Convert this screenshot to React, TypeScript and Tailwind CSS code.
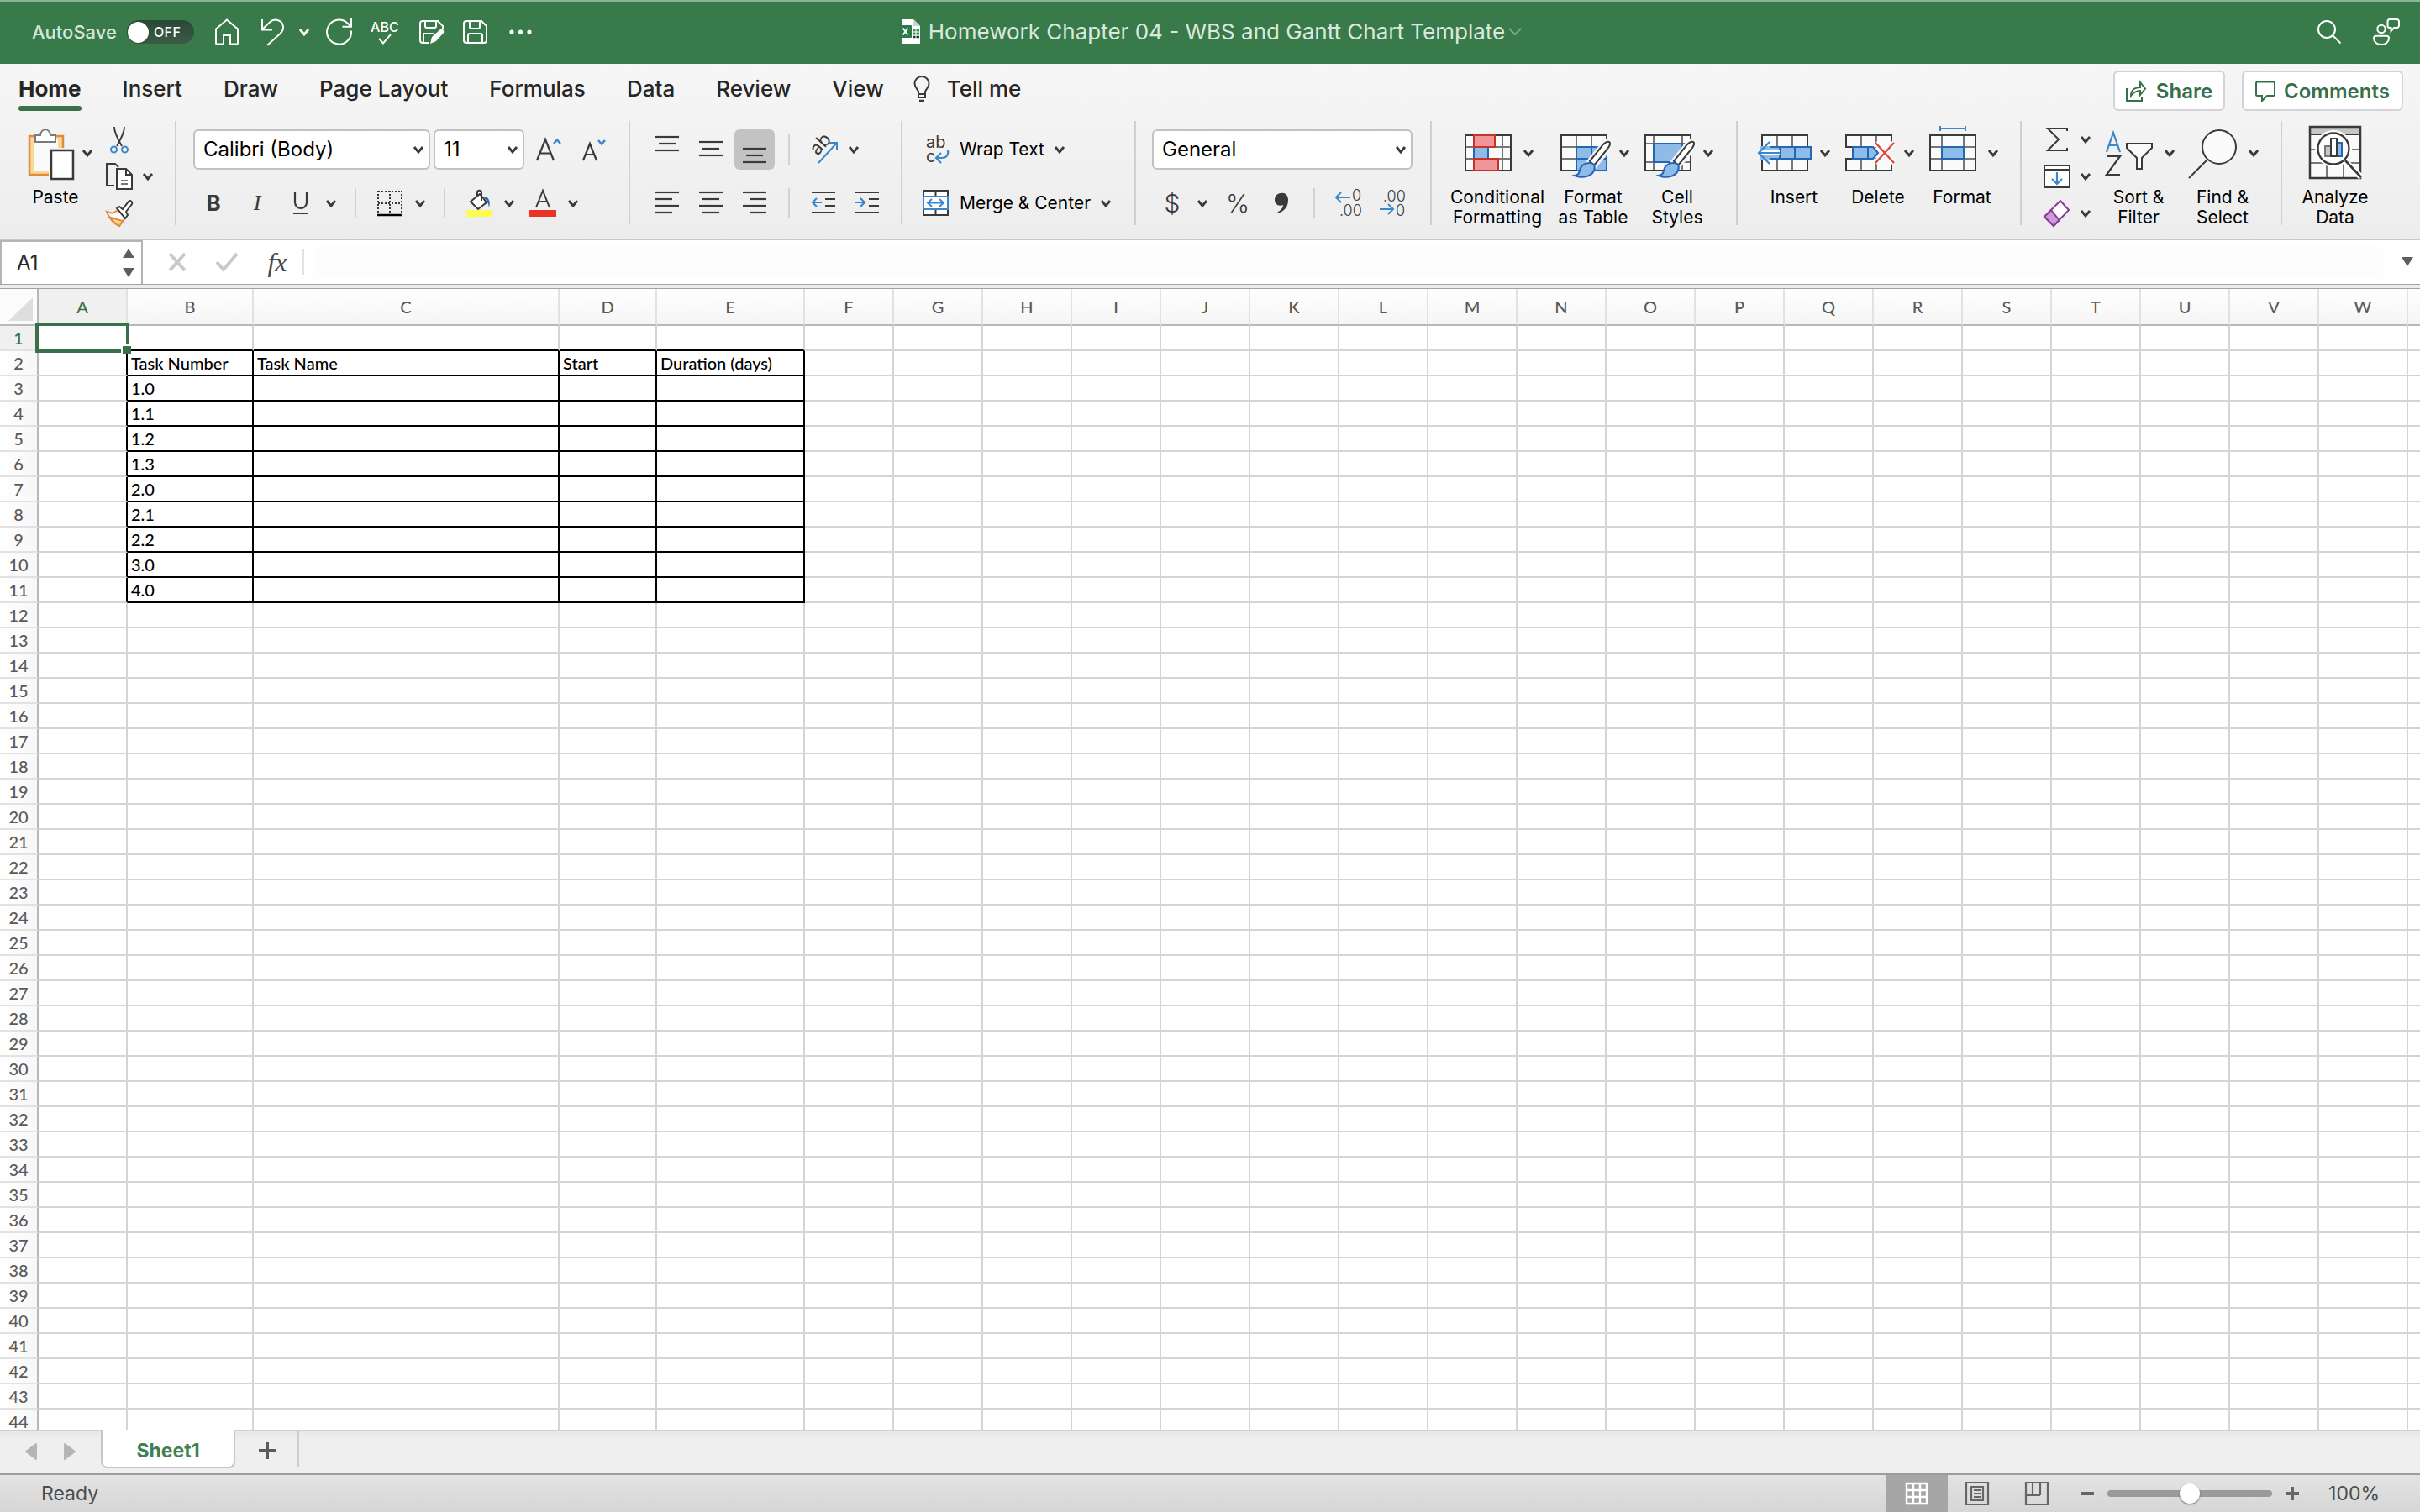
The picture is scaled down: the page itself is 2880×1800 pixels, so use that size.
import { useState, type ReactNode } from "react";

const COLS = "ABCDEFGHIJKLMNOPQRSTUVW".split("");
const ROWS = Array.from({ length: 44 }, (_, i) => i + 1);
const TABS = ["Home", "Insert", "Draw", "Page Layout", "Formulas", "Data", "Review", "View"];

const CELLS: Record<string, string> = {
  B2: "Task Number", C2: "Task Name", D2: "Start", E2: "Duration (days)",
  B3: "1.0", B4: "1.1", B5: "1.2", B6: "1.3", B7: "2.0", B8: "2.1", B9: "2.2", B10: "3.0", B11: "4.0",
};

const colWidth = (c: string) =>
  c === "B" ? "w-[150px]" : c === "C" ? "w-[364px]" : c === "D" ? "w-[116px]" : c === "E" ? "w-[176px]" : "w-[106px]";

// the task table (B2:E11) has black borders; its left and top edges belong to the neighbouring cells
const cellBorder = (c: string, r: number) => {
  const right = "ABCDE".includes(c) && r >= 2 && r <= 11 ? "border-r-black" : "border-r-[#d4d4d4]";
  const bottom = "BCDE".includes(c) && r >= 1 && r <= 11 ? "border-b-black" : "border-b-[#d4d4d4]";
  return `${right} ${bottom}`;
};

function Svg({ w = 32, h = 32, children, className = "" }: { w?: number; h?: number; children: ReactNode; className?: string }) {
  return (
    <svg width={w} height={h} viewBox={`0 0 ${w} ${h}`} fill="none" stroke="#3a3a3a" strokeWidth="2" className={`shrink-0 overflow-visible ${className}`} aria-hidden="true">
      {children}
    </svg>
  );
}

function Chevron({ color = "#3a3a3a" }: { color?: string }) {
  return <Svg w={12} h={8}><path d="M1 1 6 7l5-6" stroke={color} strokeWidth="2.8" /></Svg>;
}

const Sep = () => <div className="w-[2px] h-[124px] shrink-0 bg-[#d0d0d0]" />;
const ShortSep = ({ className = "" }: { className?: string }) => <div className={`w-[2px] h-9 shrink-0 bg-[#d2d2d2] ${className}`} />;

function IconButton({ label, children, className = "" }: { label: string; children: ReactNode; className?: string }) {
  return <button aria-label={label} className={`flex items-center justify-center shrink-0 ${className}`}>{children}</button>;
}

function BigButton({ icon, lines, menu = true, className = "w-[86px]" }: { icon: ReactNode; lines: string[]; menu?: boolean; className?: string }) {
  return (
    <button className={`flex flex-col items-center shrink-0 pt-1.5 ${className}`}>
      <span className="flex items-center gap-2.5">{icon}{menu && <Chevron />}</span>
      <span className="mt-[9px] flex flex-col items-center text-[21px] leading-6 whitespace-nowrap">
        {lines.map((l) => <span key={l}>{l}</span>)}
      </span>
    </button>
  );
}

function Picker({ label, value, className }: { label: string; value: string; className: string }) {
  return (
    <div className={`relative shrink-0 h-12 ${className}`}>
      <select aria-label={label} defaultValue={value} className="appearance-none w-full h-full pl-2.5 rounded-md border-2 border-[#c2c2c2] bg-white text-[24px] text-black">
        <option>{value}</option>
      </select>
      <span className="absolute right-2 top-5 pointer-events-none"><Chevron /></span>
    </div>
  );
}

// horizontal rules of an alignment icon: [x1, x2] per line
function Lines({ spans, top, step }: { spans: number[][]; top: number; step: number }) {
  return <Svg w={28} h={32}>{spans.map(([a, b], i) => <path key={i} d={`M${a} ${top + i * step}H${b}`} strokeWidth="2.2" />)}</Svg>;
}

function TitleBar() {
  const [autoSave, setAutoSave] = useState(false);
  return (
    <header className="h-[76px] shrink-0 grid grid-cols-[1fr_auto_1fr] items-center bg-[#387a49] shadow-[inset_0_2px_0_#8db39a] text-white">
      <div className="flex items-center pl-[38px]">
        <label className="flex items-center gap-3 text-[22px] font-medium text-[#d5e5d9]">
          AutoSave
          <input type="checkbox" role="switch" checked={autoSave} onChange={(e) => setAutoSave(e.target.checked)} className="sr-only" />
          <span className="w-20 h-7 rounded-full bg-linear-to-b from-[#2a4934] to-[#3c5a46] flex items-center gap-1.5 pl-px text-white">
            <span className="size-[25px] rounded-full bg-white shadow" />
            <span className="text-base font-medium tracking-wide">OFF</span>
          </span>
        </label>
        <IconButton label="Home" className="ml-[23px]">
          <Svg><path d="M3 12.5 16 1.5l13 11V29a1.5 1.5 0 0 1-1.5 1.5H20V20h-8v10.500H4.500A1.500 1.500 0 0 1 3 29z" stroke="#fff" /></Svg>
        </IconButton>
        <IconButton label="Undo" className="ml-[23px]">
          <Svg><path d="M3 1v12.500h12M3 13 12 4.500C17-.5 27 1 28 9.500c.4 3.500-1 6-3.500 8.500L9 32" stroke="#fff" /></Svg>
        </IconButton>
        <IconButton label="Undo history" className="ml-[15px]"><Chevron color="#fff" /></IconButton>
        <IconButton label="Redo" className="ml-5">
          <Svg><path d="M30 14.500a14.500 14.500 0 1 1-4.500-9L30 9.500M30 0v9.800H19.500" stroke="#fff" /></Svg>
        </IconButton>
        <IconButton label="Spelling" className="ml-[22px] w-8 flex-col">
          <span className="text-base leading-4 font-medium">ABC</span>
          <Svg w={18} h={13}><path d="m2 6 5 5.500L16 1" stroke="#fff" /></Svg>
        </IconButton>
        <IconButton label="Save as" className="ml-6">
          <Svg>
            <path d="M12 29H5a3 3 0 0 1-3-3V6a3 3 0 0 1 3-3h18l6 6v3M8 3v6a2 2 0 0 0 2 2h9a2 2 0 0 0 2-2V3M6 29V18h13" stroke="#fff" />
            <path d="m14 30 2-8 10-9c3-1 5 1 4 4l-9 10z" fill="#fff" stroke="none" />
          </Svg>
        </IconButton>
        <IconButton label="Save" className="ml-5">
          <Svg><path d="M5 3h18l6 6v17a3 3 0 0 1-3 3H5a3 3 0 0 1-3-3V6a3 3 0 0 1 3-3zM9 3v7a2 2 0 0 0 2 2h8a2 2 0 0 0 2-2V3M7 29V20a2 2 0 0 1 2-2h13a2 2 0 0 1 2 2v9" stroke="#fff" /></Svg>
        </IconButton>
        <IconButton label="More" className="ml-[22px]">
          <Svg><g fill="#fff" stroke="none"><circle cx="5" cy="16" r="2.600" /><circle cx="15.500" cy="16" r="2.600" /><circle cx="26" cy="16" r="2.600" /></g></Svg>
        </IconButton>
      </div>

      <div className="flex items-center">
        <Svg w={28} h={32}>
          <path d="M5 1h13l8 8v21H5z" fill="#fff" stroke="none" />
          <path d="M18 1v8h8z" fill="#c9d6cd" stroke="none" />
          <rect x="1" y="8" width="15" height="15" rx="1" fill="#2c7a45" stroke="none" />
          <path d="m5.500 11.500 6 8m0-8-6 8" stroke="#fff" />
          <path d="M17 14h8M17 18h8" stroke="#2c9a56" strokeWidth="3" strokeDasharray="3.500 1" />
          <path d="M17 22h8" stroke="#1b3b28" strokeWidth="2.500" strokeDasharray="3.500 1" />
        </Svg>
        <h1 className="ml-2 text-[26px] leading-8 text-[#dbe8de]">Homework Chapter 04 - WBS and Gantt Chart Template</h1>
        <button aria-label="File menu" className="ml-1"><Svg w={16} h={10}><path d="m1 1 7 7 7-7" stroke="#7aa685" strokeWidth="2.200" /></Svg></button>
      </div>

      <div className="flex items-center justify-end gap-[38px] pr-6">
        <IconButton label="Search">
          <Svg w={28} h={28}><circle cx="11" cy="11" r="10" stroke="#fff" /><path d="m18.500 18.500 9 9" stroke="#fff" /></Svg>
        </IconButton>
        <IconButton label="Collaborate">
          <Svg>
            <circle cx="10" cy="12.500" r="4.700" stroke="#fff" />
            <path d="M3.500 20.800h13a2.500 2.500 0 0 1 2.500 2.500C19 28 15 31 10 31s-9-3-9-7.700a2.500 2.500 0 0 1 2.500-2.500zM20 1h8.500A2.500 2.500 0 0 1 31 3.500v5a2.500 2.500 0 0 1-2.500 2.500H25l-3.500 4V11H20a2.500 2.500 0 0 1-2.500-2.500v-5A2.500 2.500 0 0 1 20 1z" stroke="#fff" />
          </Svg>
        </IconButton>
      </div>
    </header>
  );
}

function TabRow() {
  const [active, setActive] = useState("Home");
  return (
    <div className="h-[68px] flex justify-between text-[#262626]">
      <nav className="flex items-start gap-[49px] pl-[22px]">
        {TABS.map((t) => (
          <button key={t} onClick={() => setActive(t)}
            className={`relative h-14 pt-[3px] text-[26px] leading-8 whitespace-nowrap ${t === active ? "font-bold" : "font-medium"}`}>
            {t}
            {t === active && <span className="absolute inset-x-0 bottom-0 h-1.5 rounded-full bg-[#3a7148]" />}
          </button>
        ))}
        <button className="-ml-3.5 h-14 pt-[3px] flex items-center gap-5 text-[26px] leading-8 font-medium">
          <Svg w={20} h={32}>
            <path d="M6 22v-3C5 16 1.500 14 1.500 9.500a8.500 8.500 0 0 1 17 0C18.500 14 15 16 14 19v3zM6 22v4h8v-4" />
            <path d="M7 30h6" strokeWidth="2.500" />
          </Svg>
          Tell me
        </button>
      </nav>
      <div className="flex gap-5 pr-5 pt-2 text-[24px] font-semibold text-[#38704a]">
        <button className="h-12 w-[133px] pt-0.5 rounded-md border-2 border-[#d4d2d4] bg-white flex items-center justify-center gap-3">
          <Svg w={24} h={26}><path d="M1 9v15h18v-5M6 18c0-7 5-10 11-10V2l6 7.500-6 7.500v-5c-5 0-8 2-11 6z" stroke="#38704a" /></Svg>
          Share
        </button>
        <button className="h-12 w-48 pt-0.5 rounded-md border-2 border-[#d4d2d4] bg-white flex items-center justify-center gap-2.5">
          <Svg w={24} h={26}><path d="M1 3a1.500 1.500 0 0 1 1.500-1.500h19A1.500 1.500 0 0 1 23 3v13.500a1.500 1.500 0 0 1-1.500 1.500H14l-6 6v-6H2.500A1.500 1.500 0 0 1 1 16.500z" stroke="#38704a" /></Svg>
          Comments
        </button>
      </div>
    </div>
  );
}

const BRUSH = (
  <>
    <path d="M62 18c3 1 3 4 1 8L45 48l-7-6 17-21c3-3 5-4 7-3z" fill="#fff" stroke="#f4f4f4" strokeWidth="5" />
    <path d="M62 19c2 1 1 4-1 7L44 47l-5-5 16-20c3-3 5-4 7-3z" fill="#fff" />
    <path d="M39 44c5 0 7 4 5 9-3 7-13 10-23 6 6-1 5-4 7-9 2-4 6-6 11-6z" fill="#8fbbe8" stroke="#2266b4" />
  </>
);

function Ribbon() {
  return (
    <div className="flex h-[140px] text-black">
      {/* clipboard */}
      <div className="flex shrink-0 w-[208px] pl-[34px]">
        <button className="flex pt-2.5">
          <span className="flex flex-col items-center w-16">
            <Svg w={64} h={60}>
              <path d="M1 8h40v46H1z" fill="#f6d995" stroke="#e48a3c" strokeWidth="2.500" />
              <path d="M7 12h28v38H7z" fill="#fafafa" stroke="none" />
              <path d="M8 15V7h6c1-9 11-9 12 0h6v8z" fill="#fff" stroke="#7a7a7a" />
              <path d="M24 22h32v38H24z" fill="#f2f2f2" stroke="none" />
              <path d="M27 25h26v34H27z" fill="#fff" strokeWidth="2.500" />
            </Svg>
            <span className="mt-[9px] text-[21px] leading-6">Paste</span>
          </span>
          <span className="pt-6"><Chevron /></span>
        </button>
        <div className="flex flex-col gap-3 pt-1.5 ml-4">
          <IconButton label="Cut" className="w-8">
            <Svg>
              <path d="M10 1c0 7 4 14 9 23M22 1c0 7-4 14-9 23" strokeWidth="1.800" />
              <circle cx="9.500" cy="28" r="3.500" stroke="#3b87cc" /><circle cx="22.500" cy="28" r="3.500" stroke="#3b87cc" />
            </Svg>
          </IconButton>
          <IconButton label="Copy" className="gap-3">
            <Svg>
              <path d="M10 27H1V1h10l4 4" />
              <path d="M13 7h11l7 7v17H13z" fill="#fff" /><path d="M24 7v7h7" />
              <path d="M18 21h8M18 25h8" stroke="#777" />
            </Svg>
            <Chevron />
          </IconButton>
          <IconButton label="Format Painter" className="w-8">
            <Svg>
              <path d="M1 14 8 16l8-5 8 9-8 11C9 28 4 22 1 14z" fill="#fff" stroke="#e48a3c" />
              <path d="m6 21 14 4-4 6C11 29 8 25 6 21z" fill="#f6d995" stroke="#e48a3c" />
              <path d="m13 10 3-2 4 3 7-9c2-2 5 0 4 3l-7 9 2 4-3 4z" fill="#fff" />
            </Svg>
          </IconButton>
        </div>
      </div>
      <Sep />

      {/* font */}
      <div className="flex flex-col gap-[22px] shrink-0 w-[538px] pl-5 pt-2.5">
        <div className="flex h-12 items-center">
          <Picker label="Font" value="Calibri (Body)" className="w-[282px]" />
          <Picker label="Font size" value="11" className="ml-1 w-[108px]" />
          <IconButton label="Increase font size" className="ml-3.5">
            <Svg><path d="m1 29 10-25 10 25M4.500 20.500h13" strokeWidth="2.200" /><path d="m21 9 4-4.500L29 9" stroke="#3b87cc" strokeWidth="2.500" /></Svg>
          </IconButton>
          <IconButton label="Decrease font size" className="ml-[22px]">
            <Svg><path d="m2 29 8-20 8 20M5 22h10.500" strokeWidth="2.200" /><path d="m20 5 4 4.500L28 5" stroke="#3b87cc" strokeWidth="2.500" /></Svg>
          </IconButton>
        </div>
        <div className="flex h-9 items-center pl-2 text-[#3a3a3a] text-[26px] leading-8">
          <button className="w-8 font-bold">B</button>
          <button className="ml-5 w-8 italic font-['Liberation_Serif',serif]">I</button>
          <IconButton label="Underline" className="ml-5 w-8">
            <Svg><path d="M9 3v12a7 7 0 0 0 14 0V3" strokeWidth="2.200" /><path d="M7 28h18" /></Svg>
          </IconButton>
          <IconButton label="Underline styles" className="ml-3.5"><Chevron /></IconButton>
          <ShortSep className="ml-[22px]" />
          <IconButton label="Borders" className="ml-6 gap-3.5">
            <Svg><path d="M2 2h28M2 16h28M2 1v28M16 1v28M30 1v28" strokeDasharray="2 2" /><path d="M1 30h30" stroke="#000" strokeWidth="2.500" /></Svg>
            <Chevron />
          </IconButton>
          <ShortSep className="ml-[22px]" />
          <IconButton label="Fill color" className="ml-6 gap-3.5">
            <Svg>
              <path d="m6 14 11-9 8 10-10 8zM14 7V3c0-3 5-3 5 0v10" fill="#fff" />
              <path d="M23 8c5 1 7 6 5 13-1-5-2-8-6-11z" fill="#2f6ab5" stroke="none" />
              <path d="M0 24h32v8H0z" fill="#fdfb4e" stroke="none" />
            </Svg>
            <Chevron />
          </IconButton>
          <IconButton label="Font color" className="ml-[18px] gap-3.5">
            <Svg><path d="m8 21 8-20 8 20M11 14h10.500" /><path d="M0 24h32v8H0z" fill="#ea3323" stroke="none" /></Svg>
            <Chevron />
          </IconButton>
        </div>
      </div>
      <Sep />

      {/* alignment */}
      <div className="flex flex-col gap-[22px] shrink-0 w-[322px] pl-5 pt-2.5">
        <div className="flex h-12 items-center">
          <IconButton label="Align top" className="w-12 h-12"><Lines spans={[[0, 28], [4, 24], [0, 28]]} top={1} step={8} /></IconButton>
          <IconButton label="Align middle" className="ml-1 w-12 h-12"><Lines spans={[[0, 28], [4, 24], [0, 28]]} top={7} step={8} /></IconButton>
          <IconButton label="Align bottom" className="ml-1 w-12 h-12 rounded-md bg-[#c3c3c3]"><Lines spans={[[0, 28], [4, 24], [0, 28]]} top={15} step={8} /></IconButton>
          <ShortSep className="ml-4" />
          <IconButton label="Orientation" className="ml-[22px] gap-3">
            <Svg w={36} h={36}>
              <g transform="translate(11 26) rotate(-48)"><text x="0" y="0" fontSize="22" fill="#3a3a3a" stroke="none">ab</text></g>
              <path d="M12 34 34 10M25 10h9v9" stroke="#3b87cc" />
            </Svg>
            <Chevron />
          </IconButton>
        </div>
        <div className="flex h-9 items-center">
          <IconButton label="Align left" className="w-12"><Lines spans={[[0, 28], [0, 20], [0, 28], [0, 20]]} top={3} step={8} /></IconButton>
          <IconButton label="Center" className="ml-1 w-12"><Lines spans={[[0, 28], [4, 24], [0, 28], [4, 24]]} top={3} step={8} /></IconButton>
          <IconButton label="Align right" className="ml-1 w-12"><Lines spans={[[0, 28], [8, 28], [0, 28], [8, 28]]} top={3} step={8} /></IconButton>
          <ShortSep className="ml-4" />
          <IconButton label="Decrease indent" className="ml-4 w-12">
            <Svg w={28}><path d="M0 3h28M16 11h12M16 19h12M0 27h28" strokeWidth="2.200" /><path d="M12 15H1M6 10l-5 5 5 5" stroke="#3b87cc" strokeWidth="2.200" /></Svg>
          </IconButton>
          <IconButton label="Increase indent" className="ml-1 w-12">
            <Svg w={28}><path d="M0 3h28M16 11h12M16 19h12M0 27h28" strokeWidth="2.200" /><path d="M0 15h11M6 10l5 5-5 5" stroke="#3b87cc" strokeWidth="2.200" /></Svg>
          </IconButton>
        </div>
      </div>
      <Sep />

      <div className="flex flex-col items-start gap-[22px] shrink-0 w-[276px] pl-6 pt-2.5">
        <button className="flex h-12 items-center gap-3 text-[21px] whitespace-nowrap">
          <Svg>
            <text x="4" y="14" fontSize="20" fill="#3a3a3a" stroke="none">ab</text>
            <text x="4" y="31" fontSize="20" fill="#3a3a3a" stroke="none">c</text>
            <path d="M30 17c1 6-2 9-7 9h-6M22 20l-6 6 6 6" stroke="#3b87cc" strokeWidth="2.200" />
          </Svg>
          Wrap Text<Chevron />
        </button>
        <button className="flex h-9 items-center gap-3 text-[21px] whitespace-nowrap">
          <Svg>
            <path d="M1 1h29v29H1zM15.500 1v29" fill="#fff" />
            <path d="M1 8h29v15H1z" fill="#fff" stroke="#3b87cc" />
            <path d="M6 15.500h19M11 11l-5 4.500 5 4.500M20 11l5 4.500-5 4.500" stroke="#3b87cc" />
          </Svg>
          Merge &amp; Center<Chevron />
        </button>
      </div>
      <Sep />

      {/* number */}
      <div className="flex flex-col gap-[22px] shrink-0 w-[350px] pl-[19px] pt-2.5">
        <Picker label="Number format" value="General" className="w-[310px]" />
        <div className="flex h-9 items-center pl-2 text-[#3a3a3a] text-[30px] leading-9 font-light">
          <button className="w-8">$</button>
          <IconButton label="Currencies" className="ml-3.5"><Chevron /></IconButton>
          <button className="ml-5 w-8 flex justify-center">%</button>
          <IconButton label="Comma style" className="ml-5 w-8">
            <Svg><path d="M15 4c5-1 9 2 9 8 0 8-4 13-12 16l-1-1c5-3 7-6 7-9-6 2-10-1-10-6 0-4 3-8 7-8z" fill="#3a3a3a" stroke="none" /></Svg>
          </IconButton>
          <ShortSep className="ml-[22px]" />
          <IconButton label="Increase decimal" className="ml-6">
            <Svg>
              <text x="20" y="13" fontSize="18" fill="#3a3a3a" stroke="none">0</text>
              <text x="5" y="31" fontSize="18" fill="#3a3a3a" stroke="none">.00</text>
              <path d="M18 9H1M7 3 1 9l6 6" stroke="#3b87cc" />
            </Svg>
          </IconButton>
          <IconButton label="Decrease decimal" className="ml-5">
            <Svg>
              <text x="5" y="14" fontSize="18" fill="#3a3a3a" stroke="none">.00</text>
              <text x="20" y="31" fontSize="18" fill="#3a3a3a" stroke="none">0</text>
              <path d="M1 23h16M11 17l6 6-6 6" stroke="#3b87cc" />
            </Svg>
          </IconButton>
        </div>
      </div>
      <Sep />

      {/* styles */}
      <div className="flex gap-3.5 shrink-0 w-[362px] pl-[21px]">
        <BigButton lines={["Conditional", "Formatting"]} className="w-[114px]" icon={
          <Svg w={64} h={64}>
            <path d="M5 11h54v42H5zM15 11v42M49 11v42M5 25h54M5 39h54" fill="#fafafa" stroke="#777" />
            <path d="M5 11h54v42H5z" />
            <path d="M15 25h17v14H15z" fill="#8fbbe8" stroke="#2266b4" />
            <path d="M15 11h25v14H15zM15 39h29v14H15z" fill="#f0959a" stroke="#c93327" />
          </Svg>} />
        <BigButton lines={["Format", "as Table"]} icon={
          <Svg w={64} h={64}>
            <path d="M5 11h54v42H5zM23 11v42M41 11v42M5 25h54M5 39h54" fill="#fafafa" stroke="#777" />
            <path d="M5 11h54v42H5z" />
            <path d="M23 25h36v28H23zM41 25v28M23 39h36" fill="#8fbbe8" stroke="#2266b4" />
            {BRUSH}
          </Svg>} />
        <BigButton lines={["Cell", "Styles"]} icon={
          <Svg w={64} h={64}>
            <path d="M5 11h54v42H5zM15 11v42M49 11v42M5 21h54M5 43h54" fill="#fafafa" stroke="#777" />
            <path d="M5 11h54v42H5z" />
            <path d="M15 21h34v22H15z" fill="#8fbbe8" stroke="#2266b4" />
            {BRUSH}
          </Svg>} />
      </div>
      <Sep />

      {/* cells */}
      <div className="flex gap-3.5 shrink-0 w-[336px] pl-6">
        <BigButton lines={["Insert"]} icon={
          <Svg w={64} h={64}>
            <path d="M5 11h54v42H5zM23 11v42M41 11v42" fill="#fafafa" stroke="#777" />
            <path d="M5 11h54v42H5z" />
            <path d="M3 24h60v16H3z" fill="#8fbbe8" stroke="none" />
            <path d="M14 25h49v14H14M26 25v14M44 25v14" stroke="#2266b4" />
            <path d="M26 32H2" stroke="#fff" strokeWidth="6" />
            <path d="M26 32H2M14 19 1 32l13 13" stroke="#3b87cc" strokeWidth="2.200" />
          </Svg>} />
        <BigButton lines={["Delete"]} icon={
          <Svg w={64} h={64}>
            <path d="M5 11h54v42H5zM23 11v42M41 11v42" fill="#fafafa" stroke="#777" />
            <path d="M5 11h54v42H5z" />
            <path d="M0 26h64v12H0z" fill="#f2f2f2" stroke="none" />
            <path d="M5 25h8M5 39h8" />
            <path d="M13 25h24l6 7-6 7H13zM31 25v14" fill="#8fbbe8" stroke="#2266b4" />
            <path d="m40 20 22 24M62 20 40 44" stroke="#fff" strokeWidth="6" />
            <path d="m40 20 22 24M62 20 40 44" stroke="#e0483e" strokeWidth="2.400" />
          </Svg>} />
        <BigButton lines={["Format"]} icon={
          <Svg w={64} h={64}>
            <path d="M5 11h54v42H5zM19 11v42M45 11v42M5 25h54M5 39h54" fill="#fafafa" stroke="#777" />
            <path d="M5 11h54v42H5z" />
            <path d="M19 25h26v14H19z" fill="#8fbbe8" stroke="#2266b4" />
            <path d="M17 3h30M17 0v6M47 0v6" stroke="#3b87cc" />
          </Svg>} />
      </div>
      <Sep />

      {/* editing */}
      <div className="flex shrink-0 w-[308px] pl-[26px]">
        <div className="flex flex-col gap-3 pt-1.5">
          <IconButton label="AutoSum" className="gap-3">
            <Svg><path d="M28 6V3H5l13 13L5 29h23v-3" /></Svg><Chevron />
          </IconButton>
          <IconButton label="Fill" className="gap-3">
            <Svg><path d="M1 3h30v26H1z" fill="#fff" /><path d="M1 8h30" /><path d="M16 11v13M10 19l6 6 6-6" stroke="#3b87cc" strokeWidth="2.200" /></Svg><Chevron />
          </IconButton>
          <IconButton label="Clear" className="gap-3">
            <Svg><path d="M20 1 30 12 12 31 1 20z" fill="#fff" stroke="#8b3a9e" /><path d="M9 12 18.500 24 12 31 1 20z" fill="#cf98da" stroke="#8b3a9e" /></Svg><Chevron />
          </IconButton>
        </div>
        <div className="flex gap-3.5 ml-3.5">
          <BigButton lines={["Sort &", "Filter"]} icon={
            <Svg w={64} h={64}>
              <path d="m5 31 8-23 8 23M8 23h10" stroke="#3b87cc" strokeWidth="2.200" />
              <path d="M6 36h15L5 58h16" strokeWidth="2.200" />
              <path d="M29 21h30v5L47 38v13h-6V38L29 26z" fill="#fafafa" />
            </Svg>} />
          <BigButton lines={["Find &", "Select"]} icon={
            <Svg w={64} h={64}><circle cx="39" cy="25" r="20" fill="#fafafa" /><path d="M25 40 3 62" /></Svg>} />
        </div>
      </div>
      <Sep />

      <div className="shrink-0 pl-5">
        <BigButton menu={false} lines={["Analyze", "Data"]} icon={
          <Svg w={64} h={64}>
            <path d="M2 1h60v61H2zM2 28h60M2 44h60M22 44v18M42 44v18" fill="#fafafa" stroke="#777" />
            <path d="M2 1h60v9H2z" fill="#c6c6c6" />
            <path d="M2 1h60v61H2z" strokeWidth="2.500" />
            <circle cx="30" cy="27" r="22" fill="#fff" stroke="none" />
            <path d="m44 42 19 19" stroke="#fff" strokeWidth="7" />
            <circle cx="30" cy="27" r="18.500" fill="#fff" strokeWidth="2.400" />
            <path d="m44 41 19 20" strokeWidth="2.800" />
            <path d="M20 24h7v12h-7z" fill="#c6c6c6" stroke="#777" />
            <path d="M34 20h6v16h-6z" fill="#8fbbe8" stroke="#2266b4" />
            <path d="M27 15h7v21h-7z" fill="#fff" />
          </Svg>} />
      </div>
    </div>
  );
}

function FormulaBar() {
  return (
    <div className="shrink-0">
      <div className="h-[52px] flex items-center bg-white">
        <div className="w-[170px] h-full flex items-center justify-between pr-2 border-2 border-b-0 border-[#b4b4b4]">
          <input aria-label="Name box" defaultValue="A1" className="w-28 pl-[18px] text-[24px] text-[#262626]" />
          <Svg w={14} h={34}><path d="m7 0 7 11H0zM0 23h14L7 34z" fill="#5e5e5e" stroke="none" /></Svg>
        </div>
        <IconButton label="Cancel" className="ml-[30px]"><Svg w={22} h={24}><path d="m2 2 18 20M20 2 2 22" stroke="#c9c9c9" strokeWidth="4" /></Svg></IconButton>
        <IconButton label="Enter" className="ml-[34px]"><Svg w={28} h={24}><path d="m2 12 8 9L26 2" stroke="#c9c9c9" strokeWidth="4" /></Svg></IconButton>
        <button aria-label="Insert function" className="ml-[30px] w-8 font-['Liberation_Serif',serif] italic text-[32px] leading-8 text-[#4a4a4a]">fx</button>
        <div className="ml-3.5 w-[2px] h-[30px] bg-[#e2e2e2]" />
        <input aria-label="Formula" className="ml-3 flex-1 h-[38px] bg-[#fdfdfd]" />
        <IconButton label="Expand formula bar" className="ml-[22px] mr-2"><Svg w={14} h={12}><path d="M0 0h14L7 11z" fill="#5e5e5e" stroke="none" /></Svg></IconButton>
      </div>
      <div className="h-1.5 border-y border-[#a2a2a2] bg-[#ededed]" />
    </div>
  );
}

function Grid() {
  return (
    <main className="flex-1 min-h-0 overflow-hidden bg-white font-['Lato','Liberation_Sans',sans-serif] text-xl leading-6 font-medium">
      <table className="table-fixed w-full border-separate border-spacing-0">
        <thead>
          <tr className="h-11">
            <th className="w-[46px] p-0 pt-1.5 pr-1 border-r-2 border-b-2 border-[#b8b8b8] bg-[#fbfbfb]">
              <Svg w={32} h={28} className="ml-2"><path d="M31 0v28H2z" fill="#dedede" stroke="none" /></Svg>
            </th>
            {COLS.map((c) => (
              <th key={c} scope="col"
                className={`${colWidth(c)} p-0 border-r-2 border-b-2 border-r-[#e2e2e2] border-b-[#b8b8b8] font-medium ${c === "A" ? "bg-[#f0f0f0] text-[#38704a]" : "bg-linear-to-b from-white to-[#f5f5f5] text-[#5a5a5a]"}`}>
                {c}
              </th>
            ))}
            <th className="p-0 border-b-2 border-b-[#b8b8b8] bg-linear-to-b from-white to-[#f5f5f5]" />
          </tr>
        </thead>
        <tbody>
          {ROWS.map((r) => (
            <tr key={r} className="h-[30px]">
              <th scope="row" className={`p-0 border-r-2 border-b-2 border-r-[#b8b8b8] border-b-[#e2e2e2] font-medium ${r === 1 ? "bg-[#f0f0f0] text-[#38704a]" : "bg-linear-to-r from-white to-[#f7f7f7] text-[#5a5a5a]"}`}>
                {r}
              </th>
              {COLS.map((c) => (
                <td key={c} className={`p-0 pl-1 border-r-2 border-b-2 whitespace-nowrap text-black ${cellBorder(c, r)} ${c + r === "A1" ? "relative" : ""}`}>
                  {CELLS[c + r]}
                  {c + r === "A1" && (
                    <>
                      <span className="absolute z-10 -inset-1 border-4 border-[#38704a]" />
                      <span className="absolute z-10 -right-1.5 -bottom-1.5 size-3 border-l-2 border-t-2 border-white bg-[#38704a]" />
                    </>
                  )}
                </td>
              ))}
              <td className="p-0 border-b-2 border-b-[#d4d4d4]" />
            </tr>
          ))}
        </tbody>
      </table>
    </main>
  );
}

function SheetTabs() {
  return (
    <div className="shrink-0 h-[52px] flex border-t-2 border-[#cfcfcf] bg-linear-to-b from-[#e8e8e8] via-[#efefef] via-20% to-[#efefef]">
      <IconButton label="Previous sheet" className="ml-[30px] h-12"><Svg w={14} h={20}><path d="M13 1v18L1 10z" fill="#b5b5b5" stroke="#b5b5b5" strokeLinejoin="round" /></Svg></IconButton>
      <IconButton label="Next sheet" className="ml-8 h-12"><Svg w={14} h={20}><path d="M1 1v18l12-9z" fill="#b5b5b5" stroke="#b5b5b5" strokeLinejoin="round" /></Svg></IconButton>
      <button className="ml-[30px] -mt-0.5 h-[46px] w-40 pt-1.5 rounded-b-lg border-2 border-t-0 border-[#c6c6c6] bg-white text-[23px] font-bold text-[#3f7f50]">Sheet1</button>
      <IconButton label="New sheet" className="ml-7 h-[46px]"><Svg w={20} h={20}><path d="M10 0v20M0 10h20" stroke="#5c5c5c" strokeWidth="4" /></Svg></IconButton>
      <div className="ml-[26px] w-[2px] h-[42px] bg-[#cdcdcd]" />
    </div>
  );
}

function StatusBar() {
  return (
    <footer className="shrink-0 h-[46px] flex items-center justify-between pl-[49px] pr-12 border-t-2 border-[#9d9d9d] bg-linear-to-b from-[#e3e3e3] to-[#d6d6d6] text-[23px] text-[#4c4c4c]">
      <span>Ready</span>
      <div className="h-full flex items-center">
        <IconButton label="Normal view" className="w-[74px] h-full bg-[#a6a6a6]">
          <Svg w={28} h={28}><path d="M2 2h24v24H2zM10 2v24M18 2v24M2 10h24M2 18h24" stroke="#fff" strokeWidth="2.400" /></Svg>
        </IconButton>
        <IconButton label="Page layout view" className="ml-[21px]">
          <Svg w={28} h={28}><path d="M1 1h26v26H1zM7 6h14v16H7zM10 10h8M10 14h8M10 18h8" stroke="#666" strokeWidth="2.200" /></Svg>
        </IconButton>
        <IconButton label="Page break view" className="ml-[43px]">
          <Svg w={28} h={28}><path d="M1 1h26v26H1zM9 1v15M18 1v15M1 16h17" stroke="#666" strokeWidth="2.200" /></Svg>
        </IconButton>
        <IconButton label="Zoom out" className="ml-[38px]"><Svg w={16} h={16}><path d="M0 8h16" stroke="#666" strokeWidth="4" /></Svg></IconButton>
        <input type="range" aria-label="Zoom" min={0} max={200} defaultValue={100}
          className="ml-4 w-[196px] h-2 rounded-full appearance-none bg-[#9a9a9a] [&::-webkit-slider-thumb]:appearance-none [&::-webkit-slider-thumb]:size-6 [&::-webkit-slider-thumb]:rounded-full [&::-webkit-slider-thumb]:bg-white [&::-webkit-slider-thumb]:shadow-[0_1px_2px_#666]" />
        <IconButton label="Zoom in" className="ml-4"><Svg w={16} h={16}><path d="M0 8h16M8 0v16" stroke="#666" strokeWidth="4" /></Svg></IconButton>
        <span className="ml-[35px]">100%</span>
      </div>
    </footer>
  );
}

export default function App() {
  return (
    <div className="h-screen flex flex-col overflow-hidden bg-[#f0f0f0] font-['Inter','Liberation_Sans',sans-serif]">
      <TitleBar />
      <section className="shrink-0 border-b-2 border-[#c8c8c8] bg-linear-to-b from-[#f6f6f6] to-[#ededed]">
        <TabRow />
        <Ribbon />
      </section>
      <FormulaBar />
      <Grid />
      <SheetTabs />
      <StatusBar />
    </div>
  );
}
